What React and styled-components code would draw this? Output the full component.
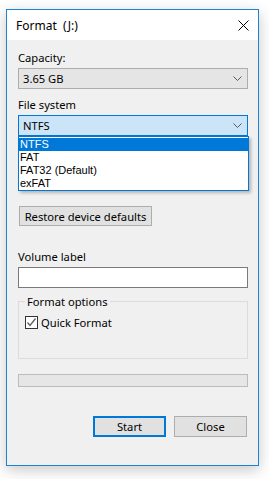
import React from "react";
import styled, { createGlobalStyle } from "styled-components";

const Global = createGlobalStyle`
  html, body {
    margin: 0;
    padding: 0;
    background: #ffffff;
  }
  body {
    font-family: "Noto Sans", "Open Sans", sans-serif;
    font-size: 11.2px;
    color: #000;
  }
`;

const Stage = styled.div`
  width: 269px;
  height: 479px;
  padding: 9px 10px 0 6px;
  box-sizing: border-box;
`;

const Window = styled.div`
  width: 253px;
  height: 457px;
  box-sizing: border-box;
  border: 1px solid #1883d7;
  background: #f0f0f0;
  box-shadow: 0 4px 14px rgba(0, 0, 0, 0.22);
  display: flex;
  flex-direction: column;
`;

const TitleBar = styled.div`
  height: 30px;
  background: #ffffff;
  display: flex;
  align-items: center;
  justify-content: space-between;
  padding: 0 9px 0 9px;
  flex-shrink: 0;
`;

const Title = styled.span`
  white-space: pre;
  font-size: 12px;
`;

const Body = styled.div`
  position: relative;
  padding: 10px 10px 0 11px;
  display: flex;
  flex-direction: column;
`;

const Label = styled.div`
  height: 15px;
  line-height: 15px;
  margin-top: ${(p) => p.$top || 0}px;
  margin-bottom: ${(p) => p.$bottom || 3}px;
  white-space: nowrap;
`;

const Select = styled.div`
  height: 21px;
  box-sizing: border-box;
  border: 1px solid ${(p) => (p.$active ? "#0078d7" : "#adadad")};
  background: ${(p) => (p.$active ? "#cce4f7" : "#e5e5e5")};
  display: flex;
  align-items: center;
  justify-content: space-between;
  padding: 0 5px 0 4px;
`;

const ListWrap = styled.div`
  position: relative;
  height: 0;
`;

const List = styled.div`
  position: absolute;
  left: 0;
  right: -1px;
  top: 0;
  box-sizing: border-box;
  border: 1px solid #0078d7;
  background: #ffffff;
  box-shadow: 2px 2px 3px rgba(0, 0, 0, 0.25);
  padding: 1px 0 0;
  z-index: 2;
`;

const Option = styled.div`
  height: 13px;
  line-height: 13px;
  font-family: "Liberation Sans", Arial, sans-serif;
  font-size: 11px;
  padding-left: 1px;
  white-space: nowrap;
  overflow: hidden;
  background: ${(p) => (p.$selected ? "#0078d7" : "transparent")};
  color: ${(p) => (p.$selected ? "#ffffff" : "#000")};
`;

const Button = styled.div`
  height: ${(p) => p.$height || 20}px;
  box-sizing: border-box;
  border: ${(p) => (p.$default ? "2px solid #0078d7" : "1px solid #adadad")};
  background: #e1e1e1;
  display: flex;
  align-items: center;
  justify-content: center;
  width: ${(p) => p.$width}px;
  white-space: nowrap;
`;

const RestoreRow = styled.div`
  margin-top: 70px;
  padding-left: 1px;
  display: flex;
`;

const TextInput = styled.div`
  height: 21px;
  box-sizing: border-box;
  border: 1px solid #7a7a7a;
  background: #ffffff;
`;

const Group = styled.fieldset`
  margin: 6px 0 0;
  padding: 0 0 0 6px;
  height: 65px;
  box-sizing: border-box;
  border: 1px solid #dcdcdc;
  min-width: 0;
`;

const Legend = styled.legend`
  padding: 0 2px;
  margin-left: 0;
  line-height: 15px;
  font-size: 11.2px;
`;

const CheckRow = styled.div`
  display: flex;
  align-items: center;
  gap: 3px;
  margin-top: 6px;
`;

const Box = styled.div`
  width: 13px;
  height: 13px;
  box-sizing: border-box;
  border: 1px solid #333333;
  background: #ffffff;
  display: flex;
  align-items: center;
  justify-content: center;
`;

const Progress = styled.div`
  margin-top: 15px;
  height: 13px;
  box-sizing: border-box;
  border: 1px solid #bcbcbc;
  background: #e6e6e6;
`;

const Footer = styled.div`
  margin-top: 29px;
  display: flex;
  justify-content: flex-end;
  gap: 8px;
  padding-right: 1px;
`;

const Chevron = () => (
  <svg width="9" height="5" viewBox="0 0 9 5">
    <path d="M0.5 0.5 L4.5 4.5 L8.5 0.5" fill="none" stroke="#5a5a5a" strokeWidth="1" />
  </svg>
);

const CloseIcon = () => (
  <svg width="11" height="11" viewBox="0 0 11 11">
    <path d="M0.5 0.5 L10.5 10.5 M10.5 0.5 L0.5 10.5" stroke="#000" strokeWidth="1" />
  </svg>
);

const Check = () => (
  <svg width="11" height="11" viewBox="0 0 11 11">
    <path d="M1.5 5.5 L4 8.5 L9.5 1.5" fill="none" stroke="#5c5c5c" strokeWidth="1.3" />
  </svg>
);

const App = () => {
  const options = ["NTFS", "FAT", "FAT32 (Default)", "exFAT"];
  return (
    <>
      <Global />
      <Stage>
        <Window>
          <TitleBar>
            <Title>Format  (J:)</Title>
            <CloseIcon />
          </TitleBar>
          <Body>
            <Label>Capacity:</Label>
            <Select>
              <span>3.65 GB</span>
              <Chevron />
            </Select>
            <Label $top={8}>File system</Label>
            <Select $active>
              <span>NTFS</span>
              <Chevron />
            </Select>
            <ListWrap>
              <List>
                {options.map((o, i) => (
                  <Option key={o} $selected={i === 0}>
                    {o}
                  </Option>
                ))}
              </List>
            </ListWrap>
            <RestoreRow>
              <Button $width={133}>Restore device defaults</Button>
            </RestoreRow>
            <Label $top={23}>Volume label</Label>
            <TextInput />
            <Group>
              <Legend>Format options</Legend>
              <CheckRow>
                <Box>
                  <Check />
                </Box>
                <span>Quick Format</span>
              </CheckRow>
            </Group>
            <Progress />
            <Footer>
              <Button $default $width={73} $height={21}>
                Start
              </Button>
              <Button $width={73} $height={21}>
                Close
              </Button>
            </Footer>
          </Body>
        </Window>
      </Stage>
    </>
  );
};

export default App;
